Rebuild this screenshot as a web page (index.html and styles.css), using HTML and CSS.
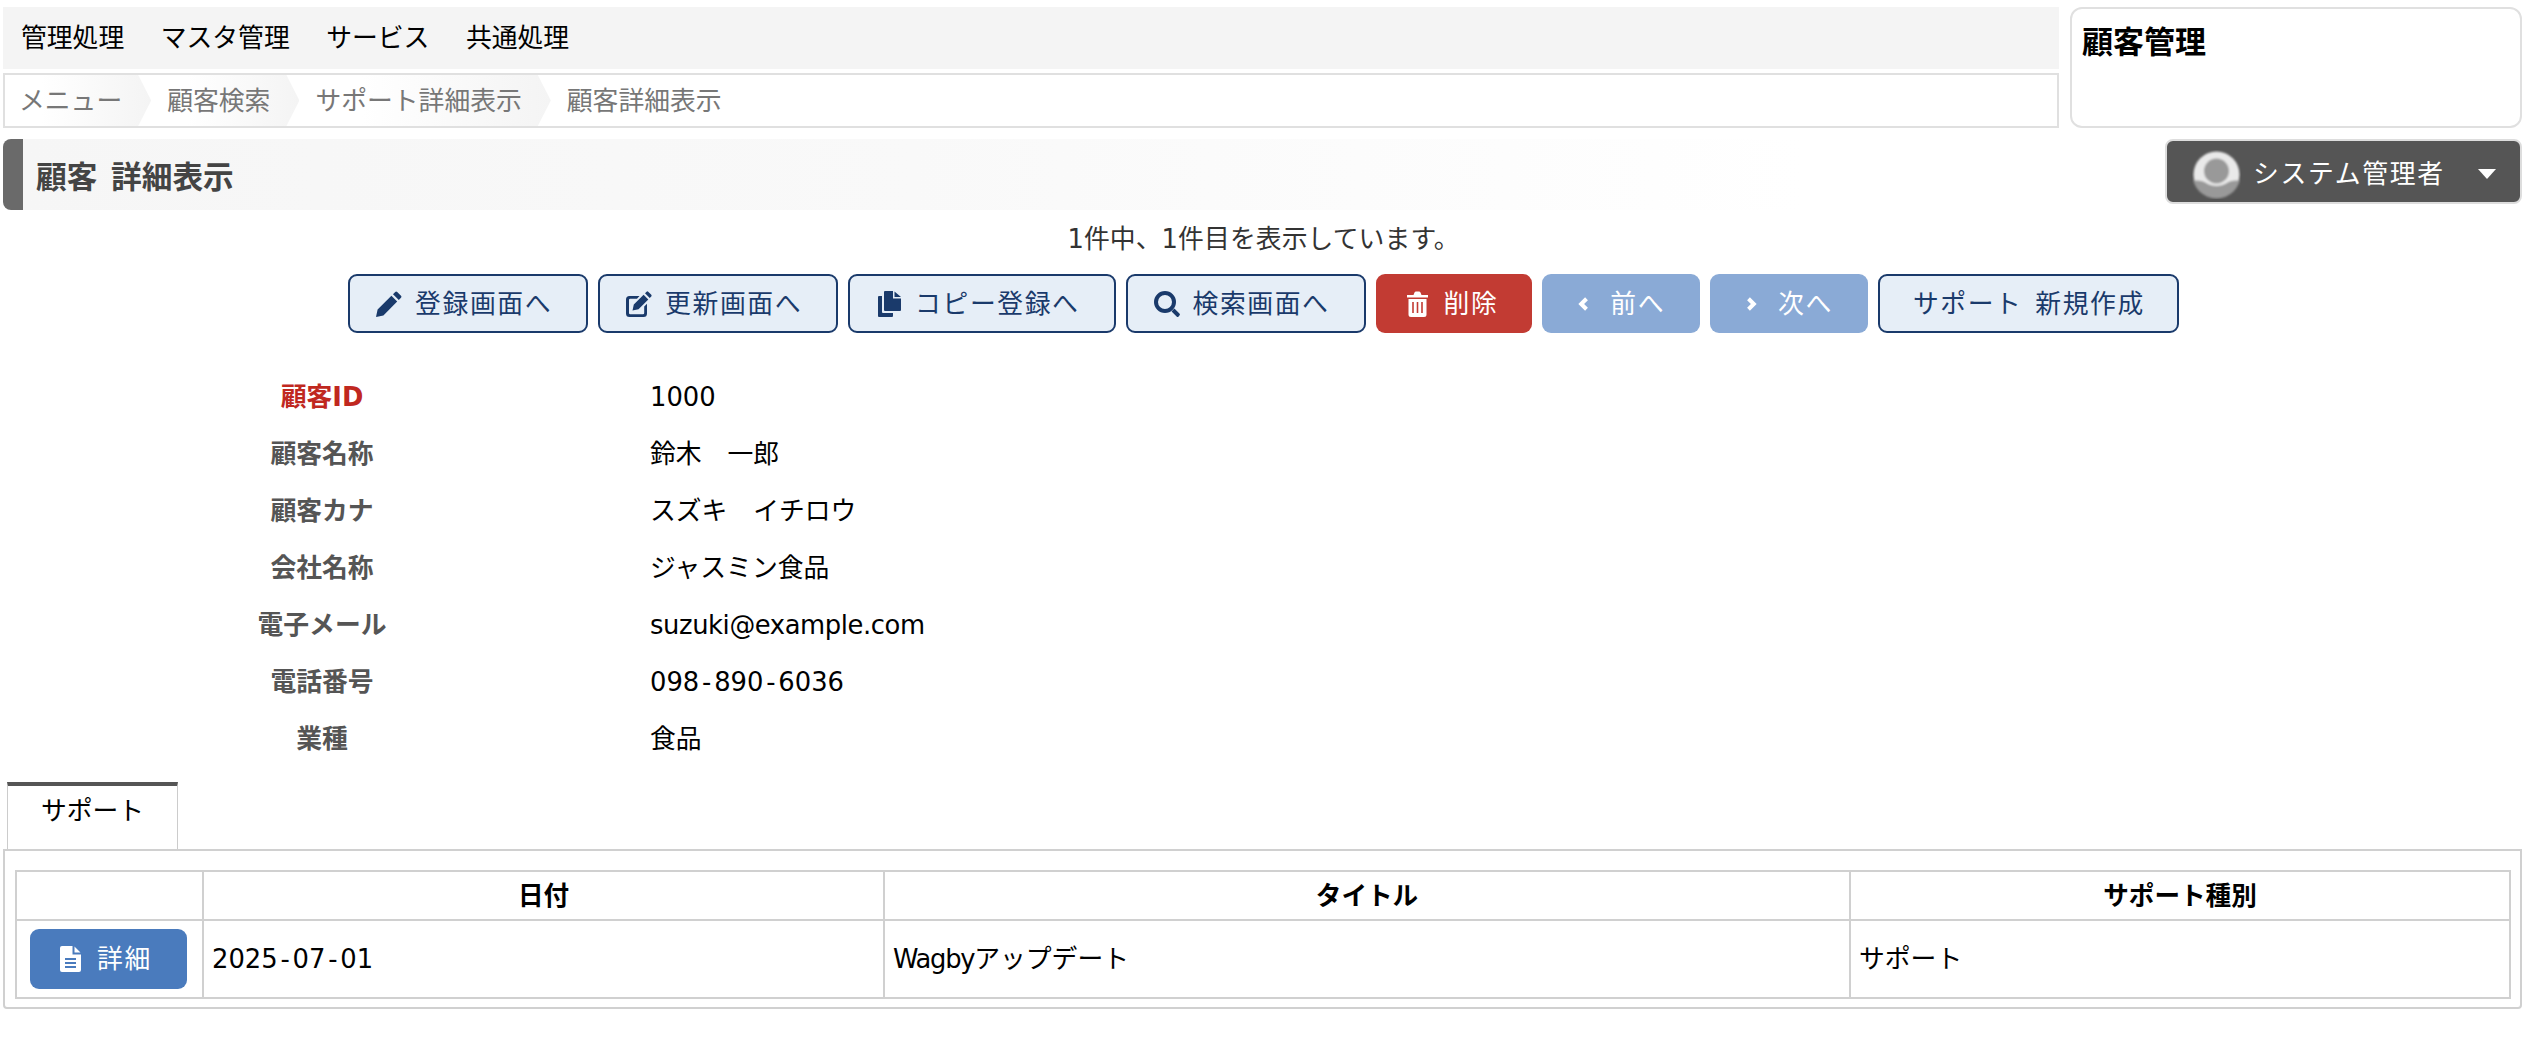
FILE: index.html
```html
<!DOCTYPE html>
<html lang="ja">
<head>
<meta charset="utf-8">
<title>顧客 詳細表示</title>
<link rel="stylesheet" href="styles.css">
</head>
<body>
<header class="top">
  <div class="top-main">
    <nav class="menu">
      <a>管理処理</a><a>マスタ管理</a><a>サービス</a><a>共通処理</a>
    </nav>
    <ol class="crumbs">
      <li class="crumb crumb-first">メニュー</li>
      <li class="crumb">顧客検索</li>
      <li class="crumb">サポート詳細表示</li>
      <li class="crumb crumb-last">顧客詳細表示</li>
    </ol>
  </div>
  <aside class="app-box">顧客管理</aside>
</header>

<div class="title-row">
  <h1 class="page-title"><span>顧客 詳細表示</span></h1>
  <div class="user">
    <svg class="avatar" viewBox="0 0 49 49" aria-hidden="true">
      <defs>
        <filter id="soft"><feGaussianBlur stdDeviation="0.9"/></filter>
        <clipPath id="disc"><circle cx="24.5" cy="24.5" r="24"/></clipPath>
      </defs>
      <g filter="url(#soft)">
        <circle cx="24.5" cy="24.5" r="23" fill="#e9e9e9"/>
        <g clip-path="url(#disc)">
          <path d="M0 30 C6 31 10 30 14 33 C20 37 29 37 35 33 C39 30 43 31 49 30 V49 H0 Z" fill="#999"/>
        </g>
        <circle cx="24.5" cy="21" r="12.5" fill="#999"/>
      </g>
    </svg>
    <span class="user-name">システム管理者</span>
    <span class="caret"></span>
  </div>
</div>

<p class="count">1件中、1件目を表示しています。</p>

<div class="actions">
  <button class="btn btn-line">
    <svg class="ico" viewBox="0 0 26 26"><path d="M0 26 L1.6 18.6 L15.4 4.8 L21.2 10.6 L7.4 24.4 Z M17 3.2 L19.2 1 Q20.2 0 21.2 1 L25 4.8 Q26 5.8 25 6.8 L22.8 9 Z"/></svg>
    <span>登録画面へ</span>
  </button>
  <button class="btn btn-line">
    <svg class="ico" viewBox="0 0 26 26"><path d="M3.5 5 H13.5 L11 7.8 H4.2 Q3 7.8 3 9 V22 Q3 23.2 4.2 23.2 H17 Q18.2 23.2 18.2 22 V15.5 L21 12.8 V22.5 Q21 26 17.5 26 H3.5 Q0 26 0 22.5 V8.5 Q0 5 3.5 5 Z M6.5 19.5 L7.8 13.5 L17.6 3.7 L22.3 8.4 L12.5 18.2 Z M19 2.3 L20.6 .7 Q21.4 0 22.2 .7 L25.3 3.8 Q26 4.6 25.3 5.4 L23.7 7 Z"/></svg>
    <span>更新画面へ</span>
  </button>
  <button class="btn btn-line btn-copy">
    <svg class="ico ico-copy" viewBox="0 0 24 26"><path d="M7 0 H15 V7.5 H23 V19 Q23 20 22 20 H7 Q6 20 6 19 V1 Q6 0 7 0 Z M16.5 .5 L23 6 H16.5 Z M4 5 V21 Q4 22 5 22 H15 V25 Q15 26 14 26 H1 Q0 26 0 25 V6 Q0 5 1 5 Z"/></svg>
    <span>コピー登録へ</span>
  </button>
  <button class="btn btn-line">
    <svg class="ico" viewBox="0 0 26 26"><path d="M11 0 A11 11 0 1 1 11 22 A11 11 0 1 1 11 0 Z M11 4 A7 7 0 1 0 11 18 A7 7 0 1 0 11 4 Z M17.6 20.4 L20.4 17.6 L25.4 22.6 Q26.4 23.6 25.4 24.6 L24.6 25.4 Q23.6 26.4 22.6 25.4 Z" fill-rule="evenodd"/></svg>
    <span>検索画面へ</span>
  </button>
  <button class="btn btn-danger">
    <svg class="ico ico-trash" viewBox="0 0 21 26"><path d="M0 4 H6.5 L7.5 1.5 Q8 .5 9 .5 H12 Q13 .5 13.5 1.5 L14.5 4 H21 V6.5 H0 Z M1.5 8 H19.5 V23.5 Q19.5 26 17 26 H4 Q1.5 26 1.5 23.5 Z" /><path class="slot" d="M6 11 V22 M10.5 11 V22 M15 11 V22"/></svg>
    <span>削除</span>
  </button>
  <button class="btn btn-off">
    <svg class="ico ico-chev" viewBox="0 0 11 14"><path class="chev" d="M8.5 1.8 L3.2 7 L8.5 12.2"/></svg>
    <span>前へ</span>
  </button>
  <button class="btn btn-off">
    <svg class="ico ico-chev" viewBox="0 0 11 14"><path class="chev" d="M2.5 1.8 L7.8 7 L2.5 12.2"/></svg>
    <span>次へ</span>
  </button>
  <button class="btn btn-line btn-text"><span>サポート 新規作成</span></button>
</div>

<dl class="fields">
  <dt class="key">顧客ID</dt><dd>1000</dd>
  <dt>顧客名称</dt><dd>鈴木　一郎</dd>
  <dt>顧客カナ</dt><dd>スズキ　イチロウ</dd>
  <dt>会社名称</dt><dd>ジャスミン食品</dd>
  <dt>電子メール</dt><dd class="mail">suzuki@example.com</dd>
  <dt>電話番号</dt><dd>098<span class="hy">-</span>890<span class="hy">-</span>6036</dd>
  <dt>業種</dt><dd>食品</dd>
</dl>

<div class="tabs"><div class="tab">サポート</div></div>
<section class="panel">
  <table class="grid">
    <colgroup><col class="c1"><col class="c2"><col class="c3"><col class="c4"></colgroup>
    <thead>
      <tr><th></th><th>日付</th><th>タイトル</th><th>サポート種別</th></tr>
    </thead>
    <tbody>
      <tr>
        <td class="cell-btn">
          <button class="btn-detail">
            <svg class="ico-file" viewBox="0 0 21 26"><path fill-rule="evenodd" d="M2 0 H12.5 V8.5 H21 V24 Q21 26 19 26 H2 Q0 26 0 24 V2 Q0 0 2 0 Z M14.5 .5 L20.5 6.5 H14.5 Z M5 12 V14 H16 V12 Z M5 16 V18 H16 V16 Z M5 20 V22 H16 V20 Z"/></svg>
            <span>詳細</span>
          </button>
        </td>
        <td>2025<span class="hy">-</span>07<span class="hy">-</span>01</td>
        <td><span class="latin">Wagby</span>アップデート</td>
        <td>サポート</td>
      </tr>
    </tbody>
  </table>
</section>
</body>
</html>
```

FILE: styles.css
```css
* { box-sizing: border-box; }
html, body { margin: 0; padding: 0; background: #fff; }
body {
  font-family: "DejaVu Sans", "Noto Sans CJK JP", sans-serif;
  font-size: 25.8px;
  line-height: 36px;
  color: #000;
  width: 2527px;
  overflow-x: hidden;
}

.top { display: flex; gap: 11px; padding: 7px 5px 0 3px; height: 128px; }
.top-main { width: 2056px; display: flex; flex-direction: column; gap: 4px; }
.menu { height: 62px; background: #f4f4f4; display: flex; align-items: center; gap: 36.5px; padding-left: 18px; }
.crumbs { height: 55px; margin: 0; padding: 0; list-style: none; border: 2px solid #e0e0e0; display: flex; background: #fff; }
.crumb {
  display: flex; align-items: center; color: #777; padding: 1px 29px 0 16px;
  background: linear-gradient(to right, #fff 0%, #fff 25%, #f4f4f4 100%);
  clip-path: polygon(0 0, calc(100% - 13px) 0, 100% 50%, calc(100% - 13px) 100%, 0 100%);
}
.crumb-first { padding-left: 14px; }
.crumb-last { background: none; clip-path: none; }
.app-box {
  flex: 1; border: 2px solid #e0e0e0; border-radius: 12px; font-weight: 700;
  font-size: 31px; line-height: 40px; padding: 13px 10px 0;
}

.title-row { display: flex; justify-content: space-between; align-items: flex-start; padding: 11px 5px 0 3px; height: 82px; }
.page-title {
  margin: 0; flex: 0 0 1800px; height: 71px; display: flex; align-items: center; padding: 6px 0 0 13px;
  font-size: 30.7px; line-height: 40px; font-weight: 700; color: #444; word-spacing: 3px;
  border-left: 20px solid #6a6a6a; border-radius: 8px 0 0 8px;
  background: linear-gradient(to right, #f6f6f6 0%, #f9f9f9 50%, #fff 100%);
}
.user {
  width: 357px; height: 65px; background: #555; border: 2px solid #ddd; border-radius: 8px;
  display: flex; align-items: center; padding: 5px 0 0 25px; color: #fff; letter-spacing: 1.7px;
}
.avatar { width: 49px; height: 49px; flex: none; }
.user-name { margin-left: 12px; }
.caret {
  margin-left: 33px; width: 0; height: 0;
  border-left: 9px solid transparent; border-right: 9px solid transparent; border-top: 10px solid #fff;
}

.count { margin: 0; height: 64px; padding-top: 11px; text-align: center; color: #333; line-height: 36px; letter-spacing: .1px; }

.actions { display: flex; justify-content: center; gap: 10px; height: 59px; }
.btn {
  height: 59px; display: flex; align-items: center; border-radius: 9px; font: inherit; letter-spacing: 1.6px;
  cursor: pointer; padding: 0 34px 0 26px; border: 2px solid transparent;
}
.btn-line { background: #e6eef7; border-color: #1a3a6b; color: #1a3a6b; }
.btn-danger { background: #c23b33; color: #fff; padding: 0 32px 0 29px; }
.btn-off { background: #8aaad6; color: #fff; padding: 0 33px 0 34px; }
.btn-copy { padding-left: 28px; }
.btn-text { padding: 0 32px 0 33px; word-spacing: 3px; }
.ico { width: 26px; height: 26px; fill: currentColor; margin-right: 13px; flex: none; }
.ico-copy { width: 24px; }
.ico-trash { width: 21px; margin-right: 16px; }
.ico-chev { width: 11px; height: 14px; margin-right: 21px; }
.slot { fill: none; stroke: #c23b33; stroke-width: 1.6; }
.chev { fill: none; stroke: #fff; stroke-width: 4; }

.fields {
  margin: 35px 0 0; display: grid; grid-template-columns: 644px 1fr; column-gap: 6px; grid-auto-rows: 57px;
  align-items: center;
}
.fields dt { text-align: center; font-weight: 700; color: #555; }
.fields dt.key { color: #c0281f; }
.fields dd { margin: 0; }
.hy { margin: 0 2.8px; }
.mail { letter-spacing: -0.4px; }
.latin { letter-spacing: -1.3px; }

.tabs { margin-top: 15px; padding-left: 7px; height: 67px; }
.tab {
  width: 171px; height: 67px; border: 1px solid #ccc; border-top: 4px solid #555; border-bottom: 0;
  text-align: center; line-height: 50px; background: #fff;
}
.panel { margin: 0 5px 0 3px; height: 160px; border: 2px solid #d0d0d0; border-radius: 0 0 4px 4px; padding: 19px 9px 0 10px; }
.grid { width: 100%; table-layout: fixed; border-collapse: collapse; border: 2px solid #d0d0d0; }
.grid th, .grid td { border: 2px solid #d0d0d0; padding: 0 8px; }
.grid th { height: 49px; font-weight: 700; text-align: center; font-size: 25.6px; }
.grid td { height: 78px; }
.c1 { width: 187px; }
.c2 { width: 681px; }
.c3 { width: 966px; }
.grid td.cell-btn { padding: 0 0 0 13px; }
.btn-detail {
  width: 157px; height: 60px; background: #4a7bbd; border: 0; border-radius: 9px; color: #fff; font: inherit;
  letter-spacing: 1.6px; display: flex; align-items: center; padding-left: 30px;
}
.ico-file { width: 21px; height: 26px; fill: #fff; margin-right: 16px; flex: none; }
```
